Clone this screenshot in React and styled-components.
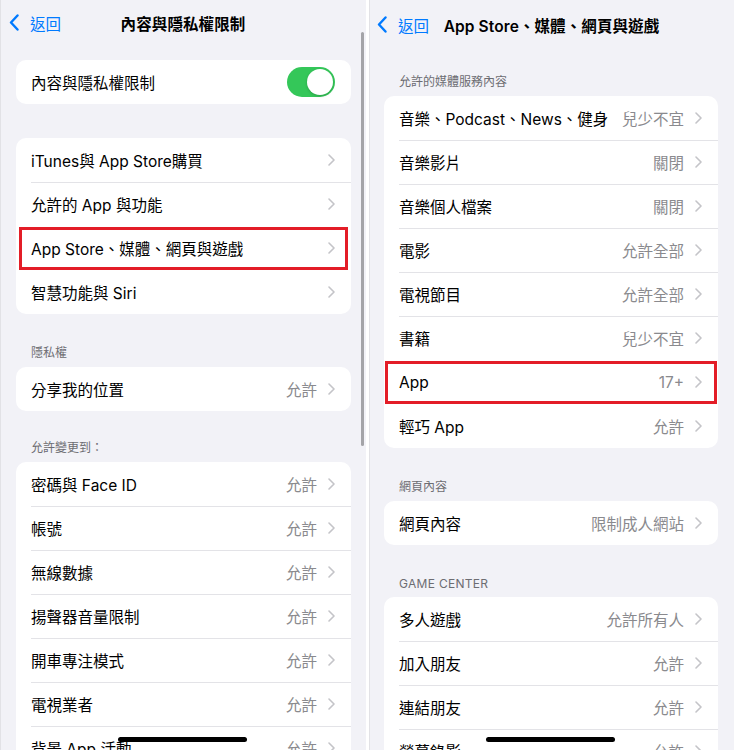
import React from "react";
import styled, { createGlobalStyle } from "styled-components";

const GlobalStyle = createGlobalStyle`
  html, body {
    margin: 0;
    padding: 0;
    background: #ffffff;
  }
  body {
    font-family: "Inter", "Noto Sans CJK TC", "Noto Sans", sans-serif;
    -webkit-font-smoothing: antialiased;
  }
`;

const Screen = styled.div`
  display: flex;
  gap: 3px;
  width: 734px;
  height: 750px;
  overflow: hidden;
  background: #ffffff;
`;

const Phone = styled.div`
  position: relative;
  width: ${(p) => p.$width}px;
  height: 750px;
  flex-shrink: 0;
  background: #f2f2f7;
  overflow: hidden;
  box-shadow: inset 1px 0 0 #e2e2e6;
`;

const Nav = styled.div`
  position: relative;
  display: flex;
  align-items: center;
  justify-content: center;
  height: ${(p) => p.$height}px;
`;

const Back = styled.div`
  position: absolute;
  left: ${(p) => p.$left}px;
  top: 0;
  bottom: 0;
  display: flex;
  align-items: center;
  gap: 11px;
  color: #007aff;
  font-size: 15.5px;
`;

const Title = styled.div`
  font-size: 15.5px;
  font-weight: 600;
  color: #000;
  letter-spacing: 0.1px;
`;

const Content = styled.div`
  padding: 0 ${(p) => p.$right}px 0 ${(p) => p.$left}px;
`;

const Header = styled.div`
  padding: ${(p) => p.$top}px 15px ${(p) => p.$bottom ?? 6}px;
  font-size: 12px;
  line-height: 16px;
  color: #6d6d72;
  letter-spacing: ${(p) => (p.$caps ? "0.3px" : "0")};
`;

const Card = styled.div`
  background: #ffffff;
  border-radius: 10px;
  margin-top: ${(p) => p.$top || 0}px;
`;

const Row = styled.div`
  position: relative;
  display: flex;
  align-items: center;
  height: 44px;
  padding: 0 16px 0 15px;
  font-size: 15.5px;
  color: #000;

  & + &::before {
    content: "";
    position: absolute;
    left: 15px;
    right: 0;
    top: 0;
    height: 1px;
    background: #e3e3e7;
  }

  ${(p) =>
    p.$mark &&
    `
    &::after {
      content: "";
      position: absolute;
      left: ${p.$mark}px;
      right: ${p.$mark}px;
      top: 1px;
      bottom: 0;
      border: 3px solid #e31d27;
    }
  `}
`;

const Label = styled.span`
  flex: 1;
  white-space: nowrap;
`;

const Value = styled.span`
  color: #8a8a8e;
  margin-right: 11px;
  white-space: nowrap;
`;

const Toggle = styled.div`
  position: relative;
  width: 48px;
  height: 30px;
  border-radius: 15px;
  background: #34c759;

  &::after {
    content: "";
    position: absolute;
    right: 2px;
    top: 2px;
    width: 26px;
    height: 26px;
    border-radius: 50%;
    background: #ffffff;
    box-shadow: 0 1px 3px rgba(0, 0, 0, 0.2);
  }
`;

const ScrollBar = styled.div`
  position: absolute;
  left: 361px;
  top: 32px;
  width: 3px;
  height: 414px;
  border-radius: 2px;
  background: #a4a4a8;
`;

const HomeBar = styled.div`
  position: absolute;
  left: ${(p) => p.$left}px;
  bottom: 8px;
  width: 129px;
  height: 5px;
  border-radius: 3px;
  background: #000;
`;

const BackChevron = () => (
  <svg width="10" height="17" viewBox="0 0 10 17">
    <path
      d="M8.5 1.5L2 8.5l6.5 7"
      fill="none"
      stroke="#007aff"
      strokeWidth="2.4"
      strokeLinecap="round"
      strokeLinejoin="round"
    />
  </svg>
);

const Chevron = () => (
  <svg width="7" height="12" viewBox="0 0 7 12">
    <path
      d="M1 1l5 5-5 5"
      fill="none"
      stroke="#c4c4c8"
      strokeWidth="1.6"
      strokeLinecap="round"
      strokeLinejoin="round"
    />
  </svg>
);

const Item = ({ label, value, mark }) => (
  <Row $mark={mark}>
    <Label>{label}</Label>
    {value && <Value>{value}</Value>}
    <Chevron />
  </Row>
);

const restrictionGroup = [
  "iTunes與 App Store購買",
  "允許的 App 與功能",
  "App Store、媒體、網頁與遊戲",
  "智慧功能與 Siri",
];

const changeGroup = [
  "密碼與 Face ID",
  "帳號",
  "無線數據",
  "揚聲器音量限制",
  "開車專注模式",
  "電視業者",
  "背景 App 活動",
];

const mediaGroup = [
  ["音樂、Podcast、News、健身", "兒少不宜"],
  ["音樂影片", "關閉"],
  ["音樂個人檔案", "關閉"],
  ["電影", "允許全部"],
  ["電視節目", "允許全部"],
  ["書籍", "兒少不宜"],
  ["App", "17+"],
  ["輕巧 App", "允許"],
];

const gameGroup = [
  ["多人遊戲", "允許所有人"],
  ["加入朋友", "允許"],
  ["連結朋友", "允許"],
  ["螢幕錄影", "允許"],
];

export default function App() {
  return (
    <>
      <GlobalStyle />
      <Screen>
        <Phone $width={366}>
          <Nav $height={45}>
            <Back $left={9}>
              <BackChevron />
              <span>返回</span>
            </Back>
            <Title>內容與隱私權限制</Title>
          </Nav>
          <Content $left={16} $right={15}>
            <Card $top={15}>
              <Row>
                <Label>內容與隱私權限制</Label>
                <Toggle />
              </Row>
            </Card>
            <Card $top={34}>
              {restrictionGroup.map((label, i) => (
                <Item key={label} label={label} mark={i === 2 ? 3 : 0} />
              ))}
            </Card>
            <Header $top={31}>隱私權</Header>
            <Card>
              <Item label="分享我的位置" value="允許" />
            </Card>
            <Header $top={29}>允許變更到：</Header>
            <Card>
              {changeGroup.map((label) => (
                <Item key={label} label={label} value="允許" />
              ))}
            </Card>
          </Content>
          <ScrollBar />
          <HomeBar $left={118} />
        </Phone>
        <Phone $width={365}>
          <Nav $height={49}>
            <Back $left={8}>
              <BackChevron />
              <span>返回</span>
            </Back>
            <Title>App Store、媒體、網頁與遊戲</Title>
          </Nav>
          <Content $left={15} $right={16}>
            <Header $top={25}>允許的媒體服務內容</Header>
            <Card>
              {mediaGroup.map(([label, value], i) => (
                <Item key={label} label={label} value={value} mark={i === 6 ? 1 : 0} />
              ))}
            </Card>
            <Header $top={31}>網頁內容</Header>
            <Card>
              <Item label="網頁內容" value="限制成人網站" />
            </Card>
            <Header $top={31} $bottom={5} $caps>
              GAME CENTER
            </Header>
            <Card>
              {gameGroup.map(([label, value]) => (
                <Item key={label} label={label} value={value} />
              ))}
            </Card>
          </Content>
          <HomeBar $left={117} />
        </Phone>
      </Screen>
    </>
  );
}
